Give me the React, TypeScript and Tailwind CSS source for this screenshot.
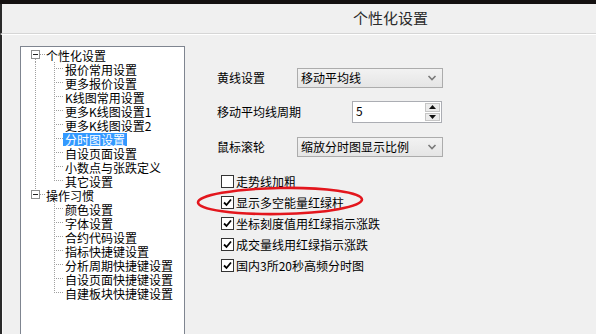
import React from 'react';

const FONT = { fontFamily: '"Noto Sans CJK SC", "Noto Sans", sans-serif' };

const GROUP_1 = [
  '报价常用设置',
  '更多报价设置',
  'K线图常用设置',
  '更多K线图设置1',
  '更多K线图设置2',
  '分时图设置',
  '自设页面设置',
  '小数点与张跌定义',
  '其它设置',
];

const GROUP_2 = [
  '颜色设置',
  '字体设置',
  '合约代码设置',
  '指标快捷键设置',
  '分析周期快捷键设置',
  '自设页面快捷键设置',
  '自建板块快捷键设置',
];

const CHECKS = [
  { label: '走势线加粗', on: false },
  { label: '显示多空能量红绿柱', on: true },
  { label: '坐标刻度值用红绿指示涨跌', on: true },
  { label: '成交量线用红绿指示涨跌', on: true },
  { label: '国内3所20秒高频分时图', on: true },
];

const DOT = { stroke: '#a0a0a0', strokeDasharray: '1 1', shapeRendering: 'crispEdges' as const };

const RootNode: React.FC<{ label: string; above: boolean; below: boolean }> = ({ label, above, below }) => (
  <div className="flex h-[14px] items-center">
    <svg width="25" height="14" className="shrink-0">
      {above && <line x1="14.5" y1="0" x2="14.5" y2="2" {...DOT} />}
      {below && <line x1="14.5" y1="11" x2="14.5" y2="14" {...DOT} />}
      <rect x="10.5" y="2.5" width="8" height="8" fill="#fff" stroke="#8e8f8f" shapeRendering="crispEdges" />
      <line x1="12" y1="6.5" x2="17" y2="6.5" stroke="#222" shapeRendering="crispEdges" />
      <line x1="19" y1="6.5" x2="25" y2="6.5" {...DOT} />
    </svg>
    <span className="text-[12px] leading-[13px] text-black">{label}</span>
  </div>
);

const ChildNode: React.FC<{ label: string; outer: boolean; last: boolean; selected?: boolean }> = ({
  label,
  outer,
  last,
  selected,
}) => (
  <div className="flex h-[14px] items-center">
    <svg width="42" height="14" className="shrink-0">
      {outer && <line x1="14.5" y1="0" x2="14.5" y2="14" {...DOT} />}
      <line x1="33.5" y1="0" x2="33.5" y2={last ? 7 : 14} {...DOT} />
      <line x1="35" y1="6.5" x2="42" y2="6.5" {...DOT} />
    </svg>
    <span
      className={`px-[2px] text-[12px] leading-[13px] whitespace-nowrap ${
        selected ? 'bg-[#3399ff] text-white' : 'text-black'
      }`}
    >
      {label}
    </span>
  </div>
);

const Chevron = () => (
  <svg width="10" height="8" viewBox="0 0 10 8">
    <polyline points="1.5,2 5,5.5 8.5,2" fill="none" stroke="#7a7a7a" strokeWidth="1.6" />
  </svg>
);

const Select: React.FC<{ value: string }> = ({ value }) => (
  <div className="flex h-[20px] w-[146px] items-center justify-between border border-[#acacac] bg-gradient-to-b from-[#f2f2f2] to-[#e5e5e5] pl-[3px] pr-[5px]">
    <span className="text-[12px] text-black">{value}</span>
    <Chevron />
  </div>
);

const SpinBox: React.FC<{ value: string }> = ({ value }) => (
  <div className="flex h-[22px] w-[90px] items-stretch justify-between border border-[#abadb3] bg-white p-[1px]">
    <span className="pl-[2px] text-[12px] leading-[16px] text-black">{value}</span>
    <div className="flex w-[15px] flex-col gap-[1px]">
      <div className="flex flex-1 items-center justify-center border border-[#c6c6c6] bg-[#ececec]">
        <svg width="7" height="4" viewBox="0 0 7 4">
          <polygon points="0,4 7,4 3.5,0" fill="#111" />
        </svg>
      </div>
      <div className="flex flex-1 items-center justify-center border border-[#c6c6c6] bg-[#ececec]">
        <svg width="7" height="4" viewBox="0 0 7 4">
          <polygon points="0,0 7,0 3.5,4" fill="#111" />
        </svg>
      </div>
    </div>
  </div>
);

const CheckBox: React.FC<{ on: boolean }> = ({ on }) => (
  <div className="flex h-[13px] w-[13px] items-center justify-center border border-[#333] bg-white">
    {on && (
      <svg width="9" height="9" viewBox="0 0 9 9">
        <polyline points="1,4.5 3.5,7 8,1.5" fill="none" stroke="#000" strokeWidth="1.8" />
      </svg>
    )}
  </div>
);

export default function App() {
  return (
    <div className="relative flex h-[334px] w-[596px] flex-col overflow-hidden bg-[#f0f0f0]" style={FONT}>
      <div className="h-[4px] shrink-0 bg-[#141010]" />

      <div className="flex h-[30px] shrink-0 items-center border-b border-[#d6d6d6] border-l-2 border-l-[#2a2a2a]">
        <div className="w-[183px]" />
        <div className="flex flex-1 justify-center">
          <span className="text-[15px] text-[#2b2b2b]">个性化设置</span>
        </div>
      </div>

      <div className="flex flex-1 border-l-2 border-l-[#2a2a2a] border-t border-t-white">
        <div className="w-[18px] shrink-0 border-l border-l-[#fafafa]" />

        <div className="mt-[11px] h-[320px] w-[165px] shrink-0 border border-[#7f8590] bg-white pt-[1px]">
          <RootNode label="个性化设置" above={false} below />
          {GROUP_1.map((t, i) => (
            <ChildNode key={t} label={t} outer last={i === GROUP_1.length - 1} selected={t === '分时图设置'} />
          ))}
          <RootNode label="操作习惯" above below={false} />
          {GROUP_2.map((t, i) => (
            <ChildNode key={t} label={t} outer={false} last={i === GROUP_2.length - 1} />
          ))}
        </div>

        <div className="flex flex-1 flex-col pl-[32px] pt-[33px] text-[12px] text-black">
          <div className="flex items-center">
            <span className="w-[80px]">黄线设置</span>
            <Select value="移动平均线" />
          </div>
          <div className="mt-[13px] flex items-center">
            <span className="w-[135px]">移动平均线周期</span>
            <SpinBox value="5" />
          </div>
          <div className="mt-[14px] flex items-center">
            <span className="w-[80px]">鼠标滚轮</span>
            <Select value="缩放分时图显示比例" />
          </div>
          <div className="mt-[14px] flex flex-col">
            {CHECKS.map((c) => (
              <div key={c.label} className="flex h-[21px] items-center gap-[2px] pl-[4px]">
                <CheckBox on={c.on} />
                <span>{c.label}</span>
              </div>
            ))}
          </div>
        </div>
      </div>

      <svg className="pointer-events-none absolute left-[190px] top-[180px]" width="185" height="42" viewBox="0 0 185 42">
        <ellipse cx="90" cy="21" rx="82" ry="13" fill="none" stroke="#e3161d" strokeWidth="2.6" transform="rotate(-1 90 21)" />
      </svg>
    </div>
  );
}
